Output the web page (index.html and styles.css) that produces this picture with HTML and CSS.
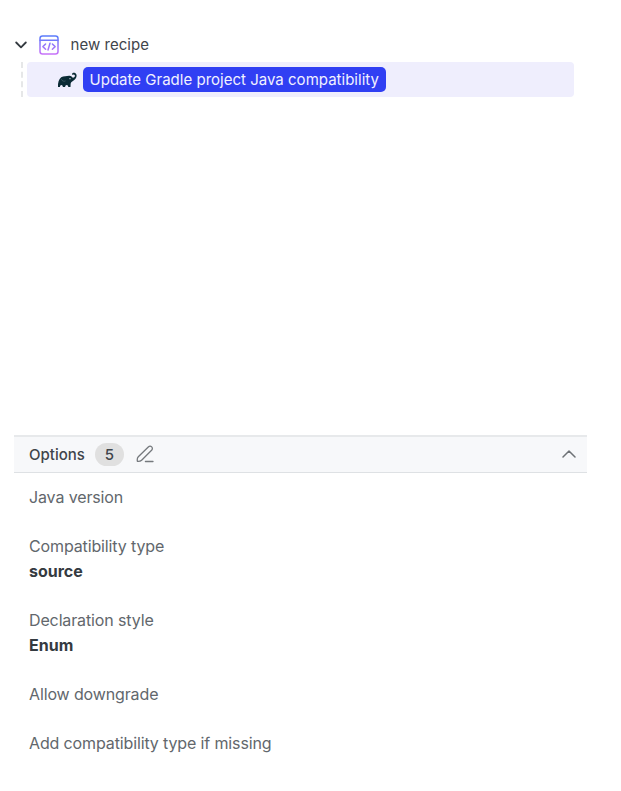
FILE: index.html
```html
<!DOCTYPE html>
<html lang="en">
<head>
<meta charset="utf-8">
<title>Recipe builder</title>
<link rel="stylesheet" href="styles.css">
</head>
<body>
<main class="builder">
  <section class="tree">
    <div class="tree-root">
      <svg class="chevron-down" viewBox="0 0 12 8" fill="none" stroke="#343a40" stroke-width="1.8" stroke-linecap="round" stroke-linejoin="round"><path d="M1.2 1.5 6 6.4l4.800-4.900"/></svg>
      <svg class="recipe-icon" viewBox="0 0 20 20" fill="none" stroke="url(#recipe)" stroke-width="1.5" stroke-linecap="round" stroke-linejoin="round">
        <defs><linearGradient id="recipe" gradientUnits="userSpaceOnUse" x1="0" y1="1" x2="0" y2="19"><stop offset="0" stop-color="#5a7cfb"/><stop offset="1" stop-color="#c873f8"/></linearGradient></defs>
        <rect x="1" y="1" width="18" height="18" rx="2.500"/>
        <path d="M1 5.200h18M6.600 9 3.900 11.600l2.700 2.600M13.400 9l2.700 2.600-2.700 2.600M11 8.200l-2 6.800"/>
      </svg>
      <span class="root-name">new recipe</span>
    </div>
    <div class="branch">
      <div class="tree-item">
        <svg class="gradle" viewBox="0 0 20 16"><path fill="#0b2b35" d="M1 15C.700 10.500 1.800 7.100 4.200 5.200 6.500 3.700 9.700 4.300 12 3.700c1.600-.300 2.900.700 3.400 1.900.900.400 2.200-.100 2.500-1.300.200-1.200-.700-2-1.700-1.600-.600.200-1.100.100-1.200-.400C14.800 1 16.400.400 17.700.800c1.700.600 2.300 2.500 1.700 4.300-.700 2.400-2.700 3.600-4.500 4.600-1 .600-1.300 1.700-1.300 3L13.500 15h-2.200c-.100-1.400-.700-2.100-1.600-2.100S8.200 13.600 8.100 15H5.900c-.100-1.400-.700-2.100-1.500-2.100S3 13.600 2.900 15z"/><path d="M4.300 7.200c.800 1.900 2.500 2.500 4.200 1.700" fill="none" stroke="#55717a" stroke-width=".6"/><circle cx="13" cy="6.700" r=".6" fill="#efeefd"/></svg>
        <span class="recipe-name">Update Gradle project Java compatibility</span>
      </div>
    </div>
  </section>
  <section class="options">
    <header class="options-header">
      <span class="title">Options</span>
      <span class="count">5</span>
      <svg class="edit" viewBox="0 0 18 18" fill="none" stroke="#75797d" stroke-width="1.3" stroke-linecap="round" stroke-linejoin="round"><path d="M1.400 16.400C1 14.200 1.200 12.900 2.300 11.800L12.300 2c1-1 2.500-1 3.400-.100s.900 2.300-.100 3.300L5.600 15.200c-1.100 1.100-2.200 1.400-4.200 1.200zM9.400 16.500h7.600"/></svg>
      <svg class="chevron-up" viewBox="0 0 14 8" fill="none" stroke="#6e7276" stroke-width="1.500" stroke-linecap="round" stroke-linejoin="round"><path d="M1 7l6-6 6 6"/></svg>
    </header>
    <dl class="option-list">
      <div><dt>Java version</dt></div>
      <div><dt>Compatibility type</dt><dd>source</dd></div>
      <div><dt>Declaration style</dt><dd>Enum</dd></div>
      <div><dt>Allow downgrade</dt></div>
      <div><dt>Add compatibility type if missing</dt></div>
    </dl>
  </section>
</main>
</body>
</html>
```
FILE: styles.css
```css
body {
  margin: 0;
  background: #fff;
  color: #3f454b;
  font-family: Inter, sans-serif;
}

.builder {
  box-sizing: border-box;
  display: flex;
  flex-direction: column;
  width: 587px;
  height: 791px;
  padding: 27px 0 0 14px;
}

.tree {
  height: 408px;
}

.tree-root {
  display: flex;
  align-items: center;
  height: 35px;
  padding-left: 1px;
}

.chevron-down {
  width: 12px;
  height: 8px;
}

.recipe-icon {
  width: 20px;
  height: 20px;
  margin: 0 11.5px 0 12px;
}

.root-name {
  font-size: 15px;
  letter-spacing: 0.03px;
}

.branch {
  margin-left: 7px;
  padding-left: 4px;
  border-left: 2px dashed #e6e7e8;
}

.tree-item {
  display: flex;
  align-items: center;
  box-sizing: border-box;
  width: 547px;
  height: 35px;
  padding-left: 30px;
  border-radius: 4px;
  background: #efeefd;
}

.gradle {
  width: 20px;
  height: 16px;
}

.recipe-name {
  margin-left: 5.5px;
  padding: 0 7px;
  border-radius: 5px;
  background: #303ff3;
  color: #f1f1ff;
  font-size: 15px;
  letter-spacing: 0.015px;
  line-height: 25px;
}

.options-header {
  display: flex;
  align-items: center;
  box-sizing: border-box;
  height: 38px;
  padding: 0 11px 1px 15px;
  border-top: 2px solid #e7e9eb;
  border-bottom: 1px solid #dee1e4;
  background: #f7f8fa;
  font-size: 15px;
  font-weight: 500;
}

.count {
  width: 29px;
  margin-left: 10px;
  border-radius: 12px;
  background: #e0e0e0;
  line-height: 23px;
  text-align: center;
}

.edit {
  width: 18px;
  height: 18px;
  margin-left: 12px;
}

.chevron-up {
  width: 14px;
  height: 8px;
  margin-left: auto;
}

.option-list {
  display: flex;
  flex-direction: column;
  gap: 24.6px;
  margin: 12.4px 15px 0;
  font-size: 16px;
  line-height: 24.5px;
}

.option-list dt {
  color: #62676c;
  letter-spacing: -0.13px;
}

.option-list dd {
  margin: 0;
  color: #343a40;
  font-weight: 700;
}
```
